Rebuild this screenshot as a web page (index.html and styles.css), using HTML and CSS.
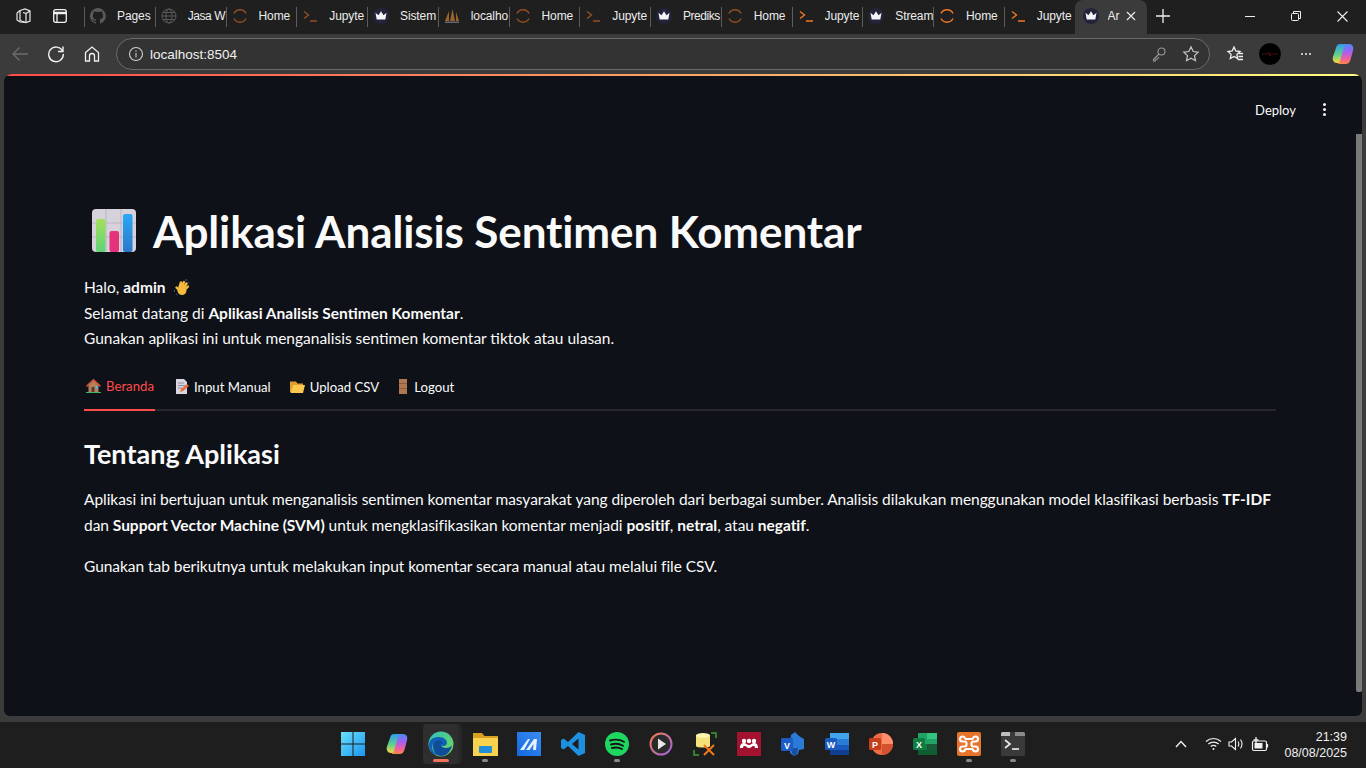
FILE: index.html
```html
<!DOCTYPE html>
<html lang="en">
<head>
  <meta charset="UTF-8" />
  <title>Aplikasi Analisis Sentimen Komentar</title>
  <link rel="stylesheet" href="styles.css">
</head>
<body>
  <svg class="defs" width="0" height="0">
    <defs>
      <linearGradient id="cop-a" x1="0" y1="0" x2="0" y2="1"><stop offset="0" stop-color="#2f9bf0"/><stop offset=".55" stop-color="#5fd08a"/><stop offset="1" stop-color="#f7d93c"/></linearGradient>
      <linearGradient id="cop-b" x1="0" y1="0" x2="0" y2="1"><stop offset="0" stop-color="#4a8cf5"/><stop offset=".4" stop-color="#a85ff0"/><stop offset=".75" stop-color="#f0609a"/><stop offset="1" stop-color="#f78a42"/></linearGradient>
    </defs>
    <symbol id="crown" viewBox="0 0 16 16">
      <circle cx="8" cy="8" r="8" fill="#23243a"/>
      <path d="M2.500 4.800l3 2.400L8 3.200l2.500 4 3-2.400-1.200 6.700H3.700z" fill="#f4f4f8"/>
    </symbol>
    <symbol id="arc" viewBox="0 0 16 16">
      <path d="M2 5.500a6.700 6.700 0 0 1 12 0M2 10.500a6.700 6.700 0 0 0 12 0" fill="none" stroke="#f37726" stroke-width="1.500"/>
    </symbol>
    <symbol id="term" viewBox="0 0 16 16">
      <path d="M2 3.500l4.500 3.500L2 10.500M8 13h7" fill="none" stroke="#f37726" stroke-width="1.400"/>
    </symbol>
    <symbol id="copilot-mark" viewBox="0 0 24 24">
      <path d="M14 2h4c3.200 0 5 2.800 4.100 6l-2.500 9.500C18.800 20.500 17 22 14.500 22H8c-1.500 0-1.500-1.200-1-2.500L12 5c.4-1.500 1-3 2-3z" fill="url(#cop-b)"/>
      <path d="M9 2h7c-1.500 0-2.500 1-3 3L9 19c-.5 1.500-1.500 2-3 2-3.500 0-5-3-4-6.500L5 6C5.600 3.500 7 2 9 2z" fill="url(#cop-a)"/>
    </symbol>
  </svg>

  <header class="tabstrip">
    <div class="strip-btn">
      <svg width="18" height="18" viewBox="0 0 18 18" fill="none" stroke="#e8e8e8" stroke-width="1.200"><path d="M5 3.500l5-1.500 5 2v10l-4 1.500-6-2z"/><path d="M2 6l3-2.500M2 6v7l3 2 6 .5M8 5.500l3 1v9M11 6.500l4-2.500"/></svg>
    </div>
    <div class="strip-btn">
      <svg width="16" height="16" viewBox="0 0 16 16" fill="none" stroke="#f0f0f0" stroke-width="1.300"><rect x="1.700" y="1.700" width="12.600" height="12.600" rx="2"/><path d="M1.700 5h12.600" stroke-width="2.500"/><path d="M5 5v9"/></svg>
    </div>
    <div class="tab-list">
      <div class="tab dim">
        <svg width="16" height="16" viewBox="0 0 16 16"><path fill="#8a8a8a" d="M8 0a8 8 0 0 0-2.500 15.600c.4.100.5-.2.500-.4v-1.400c-2.200.5-2.700-1-2.700-1-.4-.9-.9-1.200-.9-1.200-.7-.5.100-.5.100-.5.800.100 1.200.8 1.200.8.700 1.200 1.900.9 2.300.7.100-.5.300-.9.500-1.100-1.800-.2-3.600-.9-3.600-4 0-.9.300-1.600.8-2.100-.1-.2-.4-1 .1-2.100 0 0 .7-.2 2.200.8a7.500 7.500 0 0 1 4 0c1.500-1 2.200-.8 2.200-.8.400 1.100.200 1.900.1 2.100.5.600.8 1.300.8 2.100 0 3.100-1.900 3.700-3.600 3.900.3.200.5.700.5 1.500v2.200c0 .2.100.5.600.4A8 8 0 0 0 8 0z"/></svg>
        <span class="tab-name">Pages</span>
      </div>
      <div class="tab dim tight">
        <svg width="16" height="16" viewBox="0 0 16 16" fill="none" stroke="#8a8a8a"><circle cx="8" cy="8" r="7"/><ellipse cx="8" cy="8" rx="3" ry="7"/><path d="M1 8h14M2 4.500h12M2 11.500h12"/></svg>
        <span class="tab-name">Jasa W</span>
      </div>
      <div class="tab dim"><svg width="16" height="16"><use href="#arc"/></svg><span class="tab-name">Home</span></div>
      <div class="tab dim"><svg width="16" height="16"><use href="#term"/></svg><span class="tab-name">Jupyte</span></div>
      <div class="tab"><svg width="16" height="16"><use href="#crown"/></svg><span class="tab-name">Sistem</span></div>
      <div class="tab">
        <svg width="16" height="16" viewBox="0 0 16 16"><path d="M1 13L5 3v10zM6 13l2.500-12L11 13zM12 13V4l3 9z" fill="#9a6428"/><path d="M1 13.500h14V15H1z" fill="#667"/></svg>
        <span class="tab-name">localho</span>
      </div>
      <div class="tab dim"><svg width="16" height="16"><use href="#arc"/></svg><span class="tab-name">Home</span></div>
      <div class="tab dim"><svg width="16" height="16"><use href="#term"/></svg><span class="tab-name">Jupyte</span></div>
      <div class="tab tight"><svg width="16" height="16"><use href="#crown"/></svg><span class="tab-name">Prediks</span></div>
      <div class="tab dim"><svg width="16" height="16"><use href="#arc"/></svg><span class="tab-name">Home</span></div>
      <div class="tab"><svg width="16" height="16"><use href="#term"/></svg><span class="tab-name">Jupyte</span></div>
      <div class="tab"><svg width="16" height="16"><use href="#crown"/></svg><span class="tab-name">Stream</span></div>
      <div class="tab"><svg width="16" height="16"><use href="#arc"/></svg><span class="tab-name">Home</span></div>
      <div class="tab"><svg width="16" height="16"><use href="#term"/></svg><span class="tab-name">Jupyte</span></div>
      <div class="tab active">
        <svg width="16" height="16"><use href="#crown"/></svg>
        <span class="tab-name">Ar</span>
        <svg class="tab-close" width="10" height="10" viewBox="0 0 10 10" stroke="#eee" stroke-width="1.100"><path d="M1 1l8 8M9 1l-8 8"/></svg>
      </div>
      <svg class="tab-new" width="14" height="14" viewBox="0 0 14 14" stroke="#f0f0f0" stroke-width="1.300"><path d="M7 0v14M0 7h14"/></svg>
    </div>
    <div class="win-controls">
      <svg width="10" height="10" viewBox="0 0 10 10" stroke="#eee"><path d="M0 5.500h10"/></svg>
      <svg width="10" height="10" viewBox="0 0 10 10" fill="none" stroke="#eee"><rect x=".5" y="2.500" width="7" height="7" rx="1"/><path d="M2.500 2.500V.5h7v7h-2"/></svg>
      <svg width="11" height="11" viewBox="0 0 11 11" stroke="#eee" stroke-width="1.100"><path d="M.5.5l10 10M10.500.5l-10 10"/></svg>
    </div>
  </header>

  <nav class="toolbar">
    <svg class="tool" width="18" height="18" viewBox="0 0 18 18" fill="none" stroke="#6d6d6d" stroke-width="1.300"><path d="M17 9H2M8.500 2.500L2 9l6.500 6.500"/></svg>
    <svg class="tool" width="18" height="18" viewBox="0 0 18 18" fill="none" stroke="#f0f0f0" stroke-width="1.400"><path d="M15.500 6A7.300 7.300 0 1 0 16.300 9"/><path d="M16 1.500V6.500H11"/></svg>
    <svg class="tool" width="18" height="18" viewBox="0 0 18 18" fill="none" stroke="#f0f0f0" stroke-width="1.300"><path d="M2.500 7.500L9 2l6.500 5.500V16h-4v-5a2.500 2.500 0 0 0-5 0v5h-4z"/></svg>
    <div class="address">
      <svg width="16" height="16" viewBox="0 0 16 16" fill="none" stroke="#cfcfcf" stroke-width="1.100"><circle cx="8" cy="8" r="6.500"/><path d="M8 7v4.500M8 4.500v1.200"/></svg>
      <span class="url">localhost:8504</span>
      <svg class="addr-key" width="16" height="16" viewBox="0 0 16 16" fill="none" stroke="#9a9a9a" stroke-width="1.100"><circle cx="10.500" cy="5.500" r="3.500"/><path d="M8 8l-5.500 5.500V15h2l.5-2h1.500L8 11"/></svg>
      <svg width="18" height="18" viewBox="0 0 18 18" fill="none" stroke="#c8c8c8" stroke-width="1.200"><path d="M9 1.800l2.200 4.700 5 .6-3.700 3.500 1 5.100L9 13.200l-4.500 2.500 1-5.100L1.800 7.100l5-.6z"/></svg>
    </div>
    <svg class="fav-list" width="18" height="18" viewBox="0 0 18 18" fill="none" stroke="#f0f0f0" stroke-width="1.300"><path d="M8 2l1.800 4 4.200.5-3.100 2.900.8 4.200L8 11.500l-3.700 2.100.8-4.200L2 6.500 6.200 6zM13 8.500h4M12.500 11.500h4.500M11.500 14.500h5.500"/></svg>
    <div class="profile">
      <svg width="22" height="22" viewBox="0 0 22 22" fill="none"><path d="M3 11h6l1-2 1 4 1-2h7" stroke="#5a1010" stroke-width=".8"/></svg>
    </div>
    <div class="more"><i></i><i></i><i></i></div>
    <svg class="copilot" width="24" height="24"><use href="#copilot-mark"/></svg>
  </nav>

  <div class="viewport">
    <main class="app">
      <div class="app-header">
        <span class="deploy">Deploy</span>
        <div class="kebab"><i></i><i></i><i></i></div>
      </div>
      <div class="scrollbar"></div>
      <div class="block">
        <h1 class="title">
          <svg class="title-icon" width="44" height="44" viewBox="0 0 44 44">
            <defs>
              <linearGradient id="bar-g" x1="0" y1="0" x2="0" y2="1"><stop offset="0" stop-color="#a5e05a"/><stop offset="1" stop-color="#5fd37a"/></linearGradient>
              <linearGradient id="bar-b" x1="0" y1="0" x2="0" y2="1"><stop offset="0" stop-color="#2aa8f5"/><stop offset="1" stop-color="#2a78c8"/></linearGradient>
            </defs>
            <rect width="44" height="43" rx="4" fill="#d6d2dc"/>
            <path d="M0 14h44M0 28h44M14 0v43M29 0v43" stroke="#b9b5c2" stroke-width="1"/>
            <rect x="4" y="10" width="9.500" height="33" rx="2" fill="url(#bar-g)"/>
            <rect x="17.500" y="22" width="9.500" height="21" rx="2" fill="#e5327c"/>
            <rect x="31" y="5" width="9.500" height="38" rx="2" fill="url(#bar-b)"/>
          </svg>
          <span>Aplikasi Analisis Sentimen Komentar</span>
        </h1>
        <p class="intro">
          Halo, <b>admin</b>
          <svg class="wave" width="17" height="17" viewBox="0 0 17 17" fill="none"><path d="M1.500 11v2M3 15l1.500 1M12 1h2.500M15 3l1 1.500" stroke="#2c5a8c"/><g stroke="#f5b93e" stroke-width="2.400" stroke-linecap="round"><path d="M6.500 8L8 3.500M9 7.500L11 3M11 8.500L13.500 4.500M12.500 10l2.500-2.500M6 11L3.500 8.500"/></g><circle cx="9" cy="11.500" r="4.500" fill="#f5b93e"/></svg><br>
          Selamat datang di <b>Aplikasi Analisis Sentimen Komentar</b>.<br>
          Gunakan aplikasi ini untuk menganalisis sentimen komentar tiktok atau ulasan.
        </p>
        <div class="tabs">
          <div class="st-tab selected">
            <svg width="15" height="15" viewBox="0 0 15 15"><path d="M7.500 1L1 7h1.500v7h10V7H14z" fill="#b5805a"/><path d="M7.500 1L0 8l1 1 6.500-6L14 9l1-1z" fill="#d6553a"/><rect x="5.500" y="9" width="3" height="5" fill="#5a3a2a"/><rect x="9.500" y="8" width="2.500" height="2.500" fill="#5ab5e5"/><path d="M0 14h15v1H0z" fill="#3fb56a"/></svg>
            <span>Beranda</span>
          </div>
          <div class="st-tab">
            <svg width="15" height="15" viewBox="0 0 15 15"><path d="M2 0h8l3 3v12H2z" fill="#d8d4e0"/><path d="M4 4h6M4 6.500h7M4 9h4" stroke="#8f8a9c"/><path d="M6 13l1-3 6-5 2 2-6 5z" fill="#e8703a"/></svg>
            <span>Input Manual</span>
          </div>
          <div class="st-tab">
            <svg width="15" height="15" viewBox="0 0 15 15"><path d="M0 2.500h6l1.500 2H13v2H3L1.500 13H0z" fill="#e0a030"/><path d="M3 6h12l-2 8H.5z" fill="#fcc850"/></svg>
            <span>Upload CSV</span>
          </div>
          <div class="st-tab">
            <svg width="11" height="15" viewBox="2 0 11 15"><rect x="3" y="0" width="8" height="15" fill="#b07850"/><path d="M3 4.500h8M3 9.500h8" stroke="#8a5a3e"/></svg>
            <span>Logout</span>
          </div>
        </div>
        <h2 class="section">Tentang Aplikasi</h2>
        <p class="para">Aplikasi ini bertujuan untuk menganalisis sentimen komentar masyarakat yang diperoleh dari berbagai sumber. Analisis dilakukan menggunakan model klasifikasi berbasis <b>TF-IDF</b> dan <b>Support Vector Machine (SVM)</b> untuk mengklasifikasikan komentar menjadi <b>positif</b>, <b>netral</b>, atau <b>negatif</b>.</p>
        <p class="para">Gunakan tab berikutnya untuk melakukan input komentar secara manual atau melalui file CSV.</p>
      </div>
    </main>
  </div>

  <footer class="taskbar">
    <div class="task-icons">
      <div class="task">
        <svg width="24" height="24" viewBox="0 0 24 24"><defs><linearGradient id="win" x1="0" y1="0" x2="1" y2="1"><stop offset="0" stop-color="#6be0fc"/><stop offset="1" stop-color="#1a96f0"/></linearGradient></defs><path d="M0 0h11.500v11.500H0zM12.500 0H24v11.500H12.500zM0 12.500h11.500V24H0zM12.500 12.500H24V24H12.500z" fill="url(#win)"/></svg>
      </div>
      <div class="task">
        <svg width="24" height="24"><use href="#copilot-mark"/></svg>
      </div>
      <div class="task current">
        <svg width="26" height="26" viewBox="0 0 26 26"><defs><linearGradient id="edge" x1="0" y1="0" x2="1" y2="1"><stop offset="0" stop-color="#2cc2c0"/><stop offset="1" stop-color="#7ad850"/></linearGradient></defs><circle cx="13" cy="13" r="12.500" fill="url(#edge)"/><path d="M1 14C1 8 6 6 11 6c5 0 8 3 8 6 0 2-2 3-4 3-1 0-2-.5-2-1 3 0-1-4-5-3-4 1-5 6-2 10 1 1 2 2 4 3C5 24 1 20 1 14z" fill="#1261b8"/><path d="M5 15c0-4 4-6.500 8-5 3 1.500 1 4 0 4 0 2 3 3 5 3 2.500 0 5-1 6-3-1 6-5 11-11 11C8 25 5 20 5 15z" fill="#0f4c9a"/></svg>
      </div>
      <div class="task open">
        <svg width="25" height="24" viewBox="0 0 25 24"><path d="M0 1h9l2.500 3H25v20H0z" fill="#d8a020"/><rect y="6" width="25" height="18" fill="#fbd24e"/><rect x="6" y="14" width="13" height="7" rx="1" fill="#1f8fd8"/></svg>
      </div>
      <div class="task">
        <svg width="24" height="24" viewBox="0 0 24 24"><defs><linearGradient id="ma" x1="0" y1="1" x2="1" y2="0"><stop offset="0" stop-color="#1468e0"/><stop offset="1" stop-color="#3a8cf0"/></linearGradient></defs><rect width="24" height="24" fill="url(#ma)"/><path d="M3 18L11 7h2L7 18zM9 18l8-11h3l-1 11h-3l.5-6-4 6z" fill="#e6f0ff"/></svg>
      </div>
      <div class="task">
        <svg width="24" height="24" viewBox="0 0 24 24"><path d="M17.500 0L24 3v18l-6.500 3L7 14l-4.500 3.500L0 16v-8l2.500-1.500L7 10zM17.500 6.500L11 12l6.500 5.500z" fill="#1e90e0"/></svg>
      </div>
      <div class="task open">
        <svg width="24" height="24" viewBox="0 0 24 24" fill="none"><circle cx="12" cy="12" r="12" fill="#1ed760"/><path d="M5 8.500c5-1.500 10-1 14 1.300M6 12.500c4-1.200 8.500-.8 12 1.200M7 16c3.500-1 7-.6 10 1" stroke="#191414" stroke-width="1.900" stroke-linecap="round"/></svg>
      </div>
      <div class="task">
        <svg width="24" height="24" viewBox="0 0 24 24"><defs><linearGradient id="pl" x1="0" y1="0" x2="1" y2="1"><stop offset="0" stop-color="#f08050"/><stop offset="1" stop-color="#a060e0"/></linearGradient></defs><circle cx="12" cy="12" r="10.500" fill="#2a2a2a" stroke="url(#pl)" stroke-width="2"/><path d="M9 6.500l8 5.500-8 5.500z" fill="#e8e8e8"/></svg>
      </div>
      <div class="task">
        <svg width="24" height="24" viewBox="0 0 24 24" fill="none"><path d="M3 3h14v11c0 2-14 2-14 0z" fill="#f5e27a"/><ellipse cx="10" cy="3.500" rx="7" ry="2.500" fill="#fff3b0"/><path d="M1 18v5h5M18 1h5v5" stroke="#3c9a3c" stroke-width="1.500"/><path d="M11 13l10 10M21 13L11 23" stroke="#f07818" stroke-width="2"/></svg>
      </div>
      <div class="task">
        <svg width="24" height="24" viewBox="0 0 24 24"><rect width="24" height="24" fill="#a3122f"/><circle cx="7" cy="9" r="2.200" fill="#fff"/><circle cx="12" cy="9" r="2.200" fill="#fff"/><circle cx="17" cy="9" r="2.200" fill="#fff"/><path d="M3 16c0-4 2-5 4-5s3 2 5 2 3-2 5-2 4 1 4 5h-3c0-2-1-2-2-2s-2 2-4 2-3-2-4-2-2 0-2 2z" fill="#fff"/></svg>
      </div>
      <div class="task">
        <svg width="24" height="24" viewBox="0 0 24 24"><path d="M10 3l4-3 4 4 5 3v10l-5 1-1 4-4 2-4-3V12z" fill="#2a7ad8"/><path d="M11 16h6l-1 6-3 2-2-3z" fill="#1a4f9c"/><rect x="0" y="6" width="12" height="13" rx="1.500" fill="#1a5cc8"/><text x="6" y="16.500" class="ms-letter">V</text></svg>
      </div>
      <div class="task">
        <svg width="24" height="24" viewBox="0 0 24 24"><rect x="5" y="1" width="19" height="22" rx="1" fill="#2b7cd3"/><path d="M5 1h19v6H5z" fill="#41a5ee"/><path d="M5 13h19v5H5z" fill="#185abd"/><path d="M5 18h19v4a1 1 0 0 1-1 1H5z" fill="#103f91"/><rect x="0" y="6" width="12" height="12" rx="1.500" fill="#185abd"/><text x="6" y="15.800" class="ms-letter">W</text></svg>
      </div>
      <div class="task">
        <svg width="24" height="24" viewBox="0 0 24 24"><circle cx="13" cy="12" r="11" fill="#ed6c47"/><path d="M13 1a11 11 0 0 1 11 11H13z" fill="#ff8f6b"/><path d="M13 12h11a11 11 0 0 1-11 11z" fill="#d35230"/><rect x="0" y="6" width="12" height="12" rx="1.500" fill="#c43e1c"/><text x="6" y="15.800" class="ms-letter">P</text></svg>
      </div>
      <div class="task">
        <svg width="24" height="24" viewBox="0 0 24 24"><rect x="5" y="1" width="19" height="22" rx="1" fill="#21a366"/><path d="M14 1h10v6H14z" fill="#33c481"/><path d="M5 12h9v6H5z" fill="#107c41"/><path d="M14 12h10v6H14z" fill="#185c37"/><path d="M5 18h19v4a1 1 0 0 1-1 1H5z" fill="#0e5c30"/><rect x="0" y="6" width="12" height="12" rx="1.500" fill="#107c41"/><text x="6" y="15.800" class="ms-letter">X</text></svg>
      </div>
      <div class="task open">
        <svg width="24" height="24" viewBox="0 0 24 24" fill="none"><rect width="24" height="24" rx="2" fill="#e8742c"/><path d="M8 7h8M8 17h8M8 7a2.500 2.500 0 1 0-2.500 2.500H8c2 0 2 5 0 5H5.500A2.500 2.500 0 1 0 8 17M16 7a2.500 2.500 0 1 1 2.500 2.500H16c-2 0-2 5 0 5h2.500A2.500 2.500 0 1 1 16 17" stroke="#fff" stroke-width="2.200"/></svg>
      </div>
      <div class="task open">
        <svg width="24" height="24" viewBox="0 0 24 24" fill="none"><rect width="24" height="24" rx="1.500" fill="#3a3a3a"/><path d="M0 1.500A1.500 1.500 0 0 1 1.500 0H9v4H0z" fill="#bdbdbd"/><path d="M14 0h8.500A1.500 1.500 0 0 1 24 1.500V4H14z" fill="#8a8a8a"/><path d="M4 8l5 4-5 4" stroke="#e8e8e8" stroke-width="1.700"/><path d="M11 17h7" stroke="#e8e8e8" stroke-width="1.700"/></svg>
      </div>
    </div>
    <div class="tray">
      <svg width="12" height="8" viewBox="0 0 12 8" fill="none" stroke="#f0f0f0" stroke-width="1.400"><path d="M1 7l5-5.500L11 7"/></svg>
      <svg class="tray-wifi" width="17" height="14" viewBox="0 0 17 14" fill="none" stroke="#f0f0f0" stroke-width="1.200"><path d="M1 4.500c4.400-4 10.600-4 15 0M3.300 7c3-2.600 7.400-2.600 10.400 0M5.700 9.500c1.600-1.300 4-1.300 5.600 0"/><circle cx="8.500" cy="12" r="1" fill="#f0f0f0" stroke="none"/></svg>
      <svg class="tray-sound" width="15" height="14" viewBox="0 0 15 14" fill="none" stroke="#f0f0f0" stroke-width="1.100"><path d="M1 5h2.500L7.500 1.500v11L3.500 9H1zM10 4.500c1 1.500 1 3.500 0 5M12.500 2.500c1.800 2.700 1.800 6.300 0 9"/></svg>
      <svg width="18" height="15" viewBox="0 0 18 15" fill="none" stroke="#f0f0f0" stroke-width="1.200"><rect x="1.500" y="4" width="14" height="9.500" rx="1.500"/><path d="M16.500 7v3.500"/><rect x="3.500" y="6" width="8" height="5.500" fill="#f0f0f0" stroke="none"/><path d="M5 0v6M2.500 3h5" stroke-width="1.300"/></svg>
      <div class="clock">
        <span>21:39</span>
        <span>08/08/2025</span>
      </div>
    </div>
  </footer>
</body>
</html>
```

FILE: styles.css
```css
* {
  box-sizing: border-box;
}
html, body {
  margin: 0;
  height: 768px;
  overflow: hidden;
}
body {
  width: 1366px;
  display: flex;
  flex-direction: column;
  background: #3b3b3b;
  font-family: Lato, "Noto Sans", sans-serif;
  color: #fafafa;
}
.defs {
  display: block;
  height: 0;
}

/* browser chrome */
.tabstrip {
  height: 34px;
  flex: none;
  display: flex;
  align-items: center;
  background: #1f1f1f;
  padding-left: 15px;
  font-family: "Liberation Sans", sans-serif;
  font-size: 12px;
}
.strip-btn {
  width: 18px;
  margin: 0 18px 2px 0;
  display: flex;
  justify-content: center;
}
.strip-btn + .strip-btn {
  margin-right: 15px;
}
.tab-list {
  display: flex;
  align-items: center;
  height: 34px;
  flex: 1;
}
.tab {
  width: 70.750px;
  height: 34px;
  flex: none;
  display: flex;
  align-items: center;
  gap: 11px;
  padding: 0 0 2px 6px;
  position: relative;
  overflow: hidden;
}
.tab::before {
  content: "";
  position: absolute;
  left: 0;
  top: 7px;
  height: 20px;
  width: 1px;
  background: #5c5c5c;
}
.tab.dim svg {
  opacity: .55;
}
.tab-name {
  color: #ececec;
  white-space: nowrap;
  overflow: hidden;
  letter-spacing: -.1px;
  flex: 1;
}
.tab.tight .tab-name {
  letter-spacing: -.45px;
}
.tab.active {
  width: 72px;
  background: #3b3b3b;
  border-radius: 8px 8px 0 0;
  padding: 0 11px 2px 8px;
  gap: 9px;
}
.tab.active::before {
  display: none;
}
.tab-close {
  flex: none;
  margin-left: -5px;
}
.tab-new {
  margin: 0 0 2px 9px;
}
.win-controls {
  display: flex;
  align-items: center;
  gap: 36px;
  padding-right: 18px;
  margin-bottom: 2px;
}
.toolbar {
  height: 40px;
  flex: none;
  display: flex;
  align-items: center;
  background: #3b3b3b;
  padding-left: 11px;
}
.tool {
  margin-right: 18px;
}
.address {
  width: 1094px;
  height: 32px;
  margin-left: -3px;
  border: 1px solid #6a6a6a;
  border-radius: 16px;
  background: #333;
  display: flex;
  align-items: center;
  padding: 0 9px 0 11px;
}
.url {
  margin-left: 6px;
  flex: 1;
  font-family: "Liberation Sans", sans-serif;
  font-size: 13.500px;
  color: #f0f0f0;
}
.addr-key {
  margin-right: 15px;
}
.fav-list {
  margin-left: 16px;
}
.profile {
  width: 24px;
  height: 24px;
  margin-left: 14px;
  border-radius: 50%;
  background: #000;
  border: 1px solid #444;
}
.more {
  margin-left: 19px;
  display: flex;
  gap: 2px;
}
.more i {
  width: 2px;
  height: 2px;
  background: #eee;
  border-radius: 50%;
}
.copilot {
  margin-left: 20px;
}

/* page area */
.viewport {
  height: 648px;
  flex: none;
  padding: 0 4px 6px;
}
.app {
  height: 642px;
  position: relative;
  background: #0e1117;
  border-radius: 8px 8px 6px 6px;
  overflow: hidden;
}
.app::before {
  content: "";
  display: block;
  height: 2px;
  background: linear-gradient(90deg, #ff4b4b, #fffd80);
}
.app-header {
  height: 67px;
  display: flex;
  align-items: center;
  justify-content: flex-end;
  padding-right: 36px;
}
.deploy {
  font-size: 13px;
  margin-right: 27px;
}
.kebab {
  display: flex;
  flex-direction: column;
  gap: 2px;
}
.kebab i {
  width: 3px;
  height: 3px;
  border-radius: 50%;
  background: #f0f0f0;
}
.scrollbar {
  position: absolute;
  right: 0;
  top: 60px;
  width: 6px;
  height: 558px;
  background: #7a7a7a;
  border-radius: 0 0 2px 2px;
}
.block {
  padding: 60px 86px 0 80px;
}
.title {
  margin: 0;
  height: 56px;
  display: flex;
  align-items: center;
  font-size: 44px;
  font-weight: 700;
  letter-spacing: -.12px;
}
.title-icon {
  margin: 0 17px 0 8px;
}
.intro {
  margin: 16px 0 0;
  font-size: 15.500px;
  line-height: 25.600px;
}
.wave {
  vertical-align: -3px;
  margin-left: 3px;
}
b {
  font-weight: 700;
  white-space: nowrap;
}
.tabs {
  margin-top: 13px;
  display: flex;
  gap: 17px;
  height: 46px;
  border-bottom: 2px solid #26282e;
}
.st-tab {
  display: flex;
  align-items: center;
  gap: 5px;
  height: 46px;
  padding: 0 0 2px 2px;
  font-size: 13.200px;
}
.st-tab.selected {
  color: #ff4b4b;
  padding-right: 1px;
  border-bottom: 2px solid #ff4b4b;
}
.section {
  margin: 25px 0 0;
  font-size: 27px;
  line-height: 36px;
  font-weight: 700;
}
.para {
  margin: 14px 0 0;
  font-size: 15.500px;
  line-height: 26px;
  letter-spacing: -.04px;
}
.para + .para {
  margin-top: 15px;
}

/* windows taskbar */
.taskbar {
  height: 46px;
  flex: none;
  display: flex;
  align-items: center;
  background: #1e1e1e;
  position: relative;
  justify-content: flex-end;
  padding-bottom: 2px;
}
.task-icons {
  position: absolute;
  left: 331px;
  top: 0;
  display: flex;
}
.task {
  width: 44px;
  height: 44px;
  display: flex;
  align-items: center;
  justify-content: center;
  position: relative;
}
.task svg {
  position: relative;
}
.task.current::before {
  content: "";
  position: absolute;
  left: 4px;
  top: 2px;
  width: 35px;
  height: 40px;
  border-radius: 4px;
  background: #2e2e2e;
  box-shadow: 4px 0 0 #282828;
}
.task.current::after, .task.open::after {
  content: "";
  position: absolute;
  bottom: 4px;
  left: 50%;
  width: 6px;
  height: 3px;
  margin-left: -3px;
  border-radius: 2px;
  background: #8a8a8a;
}
.task.current::after {
  width: 16px;
  margin-left: -8px;
  background: #f0705a;
}
.ms-letter {
  font-family: "Liberation Sans", sans-serif;
  font-size: 9px;
  font-weight: 700;
  fill: #fff;
  text-anchor: middle;
}
.tray {
  display: flex;
  align-items: center;
  padding-right: 19px;
  font-family: "Liberation Sans", sans-serif;
  font-size: 12.500px;
}
.tray-wifi {
  margin-left: 18px;
}
.tray-sound {
  margin: 0 8px 0 6px;
}
.clock {
  display: flex;
  flex-direction: column;
  align-items: flex-end;
  gap: 2px;
  margin: 2px 0 0 15px;
  line-height: 14px;
  color: #f0f0f0;
}
```
